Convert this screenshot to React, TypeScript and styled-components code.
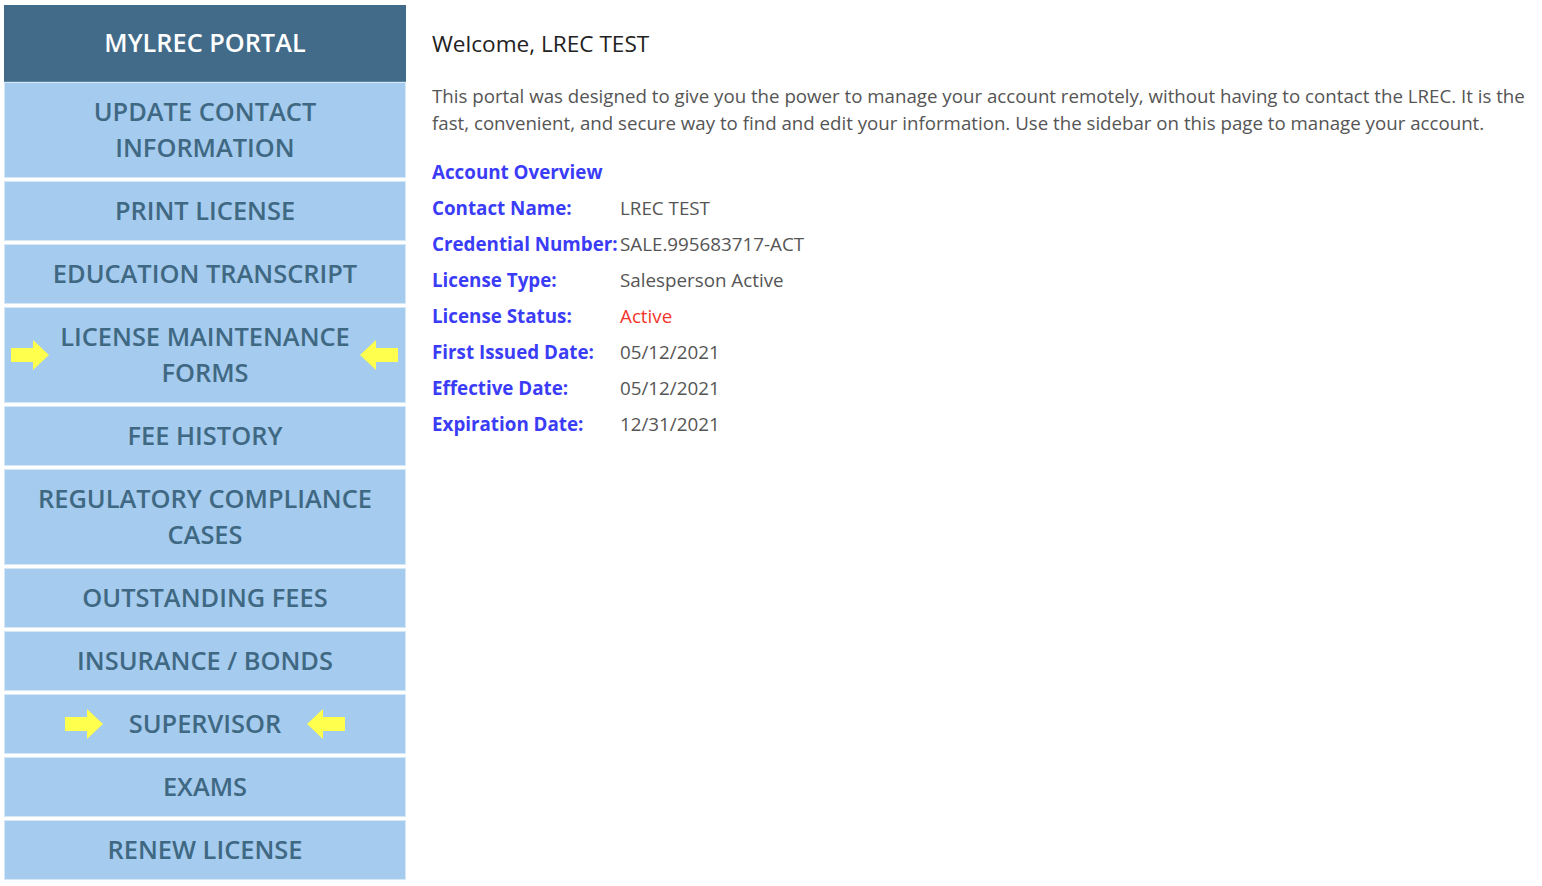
import React from "react";
import styled, { createGlobalStyle } from "styled-components";

const GlobalStyle = createGlobalStyle`
  html, body {
    margin: 0;
    padding: 0;
    background: #ffffff;
    font-family: "Open Sans", "Noto Sans", sans-serif;
  }
`;

const Page = styled.div`
  display: flex;
  align-items: flex-start;
  padding: 5px 0 0 4px;
  gap: 26px;
`;

const Sidebar = styled.nav`
  width: 402px;
  flex-shrink: 0;
  display: flex;
  flex-direction: column;
  background: #ffffff;
`;

const SidebarHeader = styled.div`
  height: 77px;
  box-sizing: border-box;
  padding-bottom: 2px;
  background: #426b89;
  color: #ffffff;
  font-size: 25.3px;
  font-weight: 600;
  display: flex;
  align-items: center;
  justify-content: center;
  border-bottom: 1px solid #5d86a5;
`;

const NavItem = styled.a<{ $tall?: boolean }>`
  position: relative;
  height: ${(p) => (p.$tall ? 96 : 60)}px;
  box-sizing: border-box;
  padding-bottom: 3px;
  background: #a5cbee;
  border: 1px solid #d6e7f6;
  color: #3f6883;
  font-size: 25.4px;
  font-weight: 600;
  line-height: 36px;
  text-align: center;
  text-decoration: none;
  display: flex;
  align-items: center;
  justify-content: center;
  gap: 26px;
  cursor: pointer;
  & + & {
    margin-top: 3px;
  }
`;

const Label = styled.span`
  display: block;
`;

const ArrowWrap = styled.span<{ $side: "left" | "right" }>`
  position: absolute;
  top: 50%;
  transform: translateY(-50%);
  ${(p) => (p.$side === "left" ? "left: 6px;" : "right: 7px;")}
  display: flex;
`;

const InlineArrow = styled.span`
  display: flex;
  margin-top: 2px;
`;

const Arrow: React.FC<{ dir: "right" | "left" }> = ({ dir }) => (
  <svg width="38" height="30" viewBox="0 0 38 30">
    {dir === "right" ? (
      <polygon points="0,8 22,8 22,0 38,15 22,30 22,22 0,22" fill="#ffff4d" />
    ) : (
      <polygon points="38,8 16,8 16,0 0,15 16,30 16,22 38,22" fill="#ffff4d" />
    )}
  </svg>
);

const Main = styled.main`
  flex: 1;
  padding-top: 24px;
  padding-right: 6px;
`;

const Welcome = styled.h1`
  margin: 0;
  font-size: 22.6px;
  font-weight: 400;
  color: #222222;
  line-height: 30px;
`;

const Intro = styled.p`
  margin: 23px 0 0;
  font-size: 18.7px;
  line-height: 27px;
  color: #555555;
`;

const Overview = styled.div`
  margin-top: 18px;
  display: flex;
  flex-direction: column;
`;

const OverviewTitle = styled.div`
  font-size: 18.8px;
  font-weight: 700;
  color: #3b3cf6;
  line-height: 36px;
`;

const Row = styled.div`
  display: grid;
  grid-template-columns: 188px auto;
  line-height: 36px;
  font-size: 18.8px;
`;

const Key = styled.span`
  font-weight: 700;
  color: #3b3cf6;
  white-space: nowrap;
`;

const Value = styled.span<{ $alert?: boolean }>`
  color: ${(p) => (p.$alert ? "#f2352b" : "#555555")};
`;

type Nav = { label: string[]; arrows?: "edge" | "inline" };

const NAV: Nav[] = [
  { label: ["UPDATE CONTACT", "INFORMATION"] },
  { label: ["PRINT LICENSE"] },
  { label: ["EDUCATION TRANSCRIPT"] },
  { label: ["LICENSE MAINTENANCE", "FORMS"], arrows: "edge" },
  { label: ["FEE HISTORY"] },
  { label: ["REGULATORY COMPLIANCE", "CASES"] },
  { label: ["OUTSTANDING FEES"] },
  { label: ["INSURANCE / BONDS"] },
  { label: ["SUPERVISOR"], arrows: "inline" },
  { label: ["EXAMS"] },
  { label: ["RENEW LICENSE"] },
];

const DETAILS: { key: string; value: string; alert?: boolean }[] = [
  { key: "Contact Name:", value: "LREC TEST" },
  { key: "Credential Number:", value: "SALE.995683717-ACT" },
  { key: "License Type:", value: "Salesperson Active" },
  { key: "License Status:", value: "Active", alert: true },
  { key: "First Issued Date:", value: "05/12/2021" },
  { key: "Effective Date:", value: "05/12/2021" },
  { key: "Expiration Date:", value: "12/31/2021" },
];

export default function App() {
  return (
    <>
      <GlobalStyle />
      <Page>
        <Sidebar>
          <SidebarHeader>MYLREC PORTAL</SidebarHeader>
          {NAV.map((item) => (
            <NavItem key={item.label.join(" ")} $tall={item.label.length > 1}>
              {item.arrows === "edge" && (
                <ArrowWrap $side="left">
                  <Arrow dir="right" />
                </ArrowWrap>
              )}
              {item.arrows === "inline" && (
                <InlineArrow>
                  <Arrow dir="right" />
                </InlineArrow>
              )}
              <Label>
                {item.label.map((l) => (
                  <div key={l}>{l}</div>
                ))}
              </Label>
              {item.arrows === "inline" && (
                <InlineArrow>
                  <Arrow dir="left" />
                </InlineArrow>
              )}
              {item.arrows === "edge" && (
                <ArrowWrap $side="right">
                  <Arrow dir="left" />
                </ArrowWrap>
              )}
            </NavItem>
          ))}
        </Sidebar>
        <Main>
          <Welcome>Welcome, LREC TEST</Welcome>
          <Intro>
            This portal was designed to give you the power to manage your account remotely, without
            having to contact the LREC. It is the fast, convenient, and secure way to find and edit
            your information. Use the sidebar on this page to manage your account.
          </Intro>
          <Overview>
            <OverviewTitle>Account Overview</OverviewTitle>
            {DETAILS.map((d) => (
              <Row key={d.key}>
                <Key>{d.key}</Key>
                <Value $alert={d.alert}>{d.value}</Value>
              </Row>
            ))}
          </Overview>
        </Main>
      </Page>
    </>
  );
}
